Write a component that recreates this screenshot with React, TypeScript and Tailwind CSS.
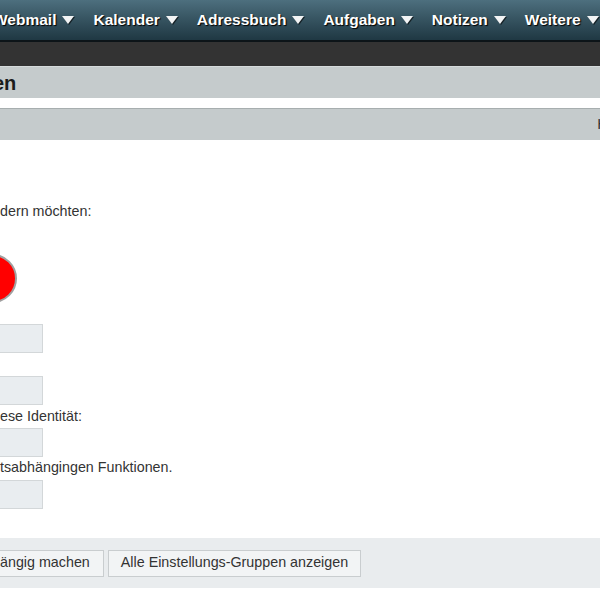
import React from "react";

const navItems = ["Webmail", "Kalender", "Adressbuch", "Aufgaben", "Notizen", "Weitere"];

function Arrow() {
  return (
    <svg width="12" height="8" viewBox="0 0 12 8" className="drop-shadow-[1px_1px_0_rgba(0,0,0,0.6)]">
      <polygon points="0,0 12,0 6,8" fill="#f2f4f5" />
    </svg>
  );
}

function Field() {
  return <div className="w-[43px] h-[29px] bg-[#e9edf0] border border-[#d3d7d9] border-l-0" />;
}

export default function App() {
  return (
    <div className="w-[600px] h-[600px] overflow-hidden bg-white font-['Liberation_Sans',Arial,sans-serif] text-[#333]">
      {/* top menu */}
      <div className="h-[42px] bg-gradient-to-b from-[#4d6f7e] to-[#1f3843] border-b-2 border-[#0c1418] flex items-center">
        <div className="flex items-center gap-[19px] -ml-[7px]">
          {navItems.map((item) => (
            <div key={item} className="flex items-center gap-[6px]">
              <span className="text-white font-bold text-[15.5px] [text-shadow:1px_1px_1px_#000]">{item}</span>
              <Arrow />
            </div>
          ))}
        </div>
      </div>
      <div className="h-[24px] bg-[#333333]" />

      {/* header */}
      <div className="h-[32px] bg-[#c5cbcc] border-t border-[#d6dbdc] flex items-center">
        <h1 className="-ml-[7px] text-[20px] leading-[24px] font-bold text-[#1c1c1c]">en</h1>
      </div>
      <div className="h-[10px]" />
      <div className="h-[32px] bg-[#c5cbcc] border-t border-[#a7aeaf] flex items-center justify-end">
        <span className="text-[15px] text-[#333] -mr-[8px]">H</span>
      </div>

      {/* form */}
      <div className="pt-[63px] text-[14.3px] leading-[17px]">
        <p>dern möchten:</p>
        <div className="mt-[34px] -ml-[32px] w-[49px] h-[49px] rounded-full bg-[#ff0000] border-2 border-[#a0a0a0]" />
        <div className="mt-[21px]">
          <Field />
        </div>
        <div className="mt-[23px]">
          <Field />
        </div>
        <p className="mt-[3px]">ese Identität:</p>
        <div className="mt-[3px]">
          <Field />
        </div>
        <p className="mt-[2px]">tsabhängingen Funktionen.</p>
        <div className="mt-[4px]">
          <Field />
        </div>
      </div>

      {/* button bar */}
      <div className="mt-[29px] h-[50px] bg-[#e9ecee] flex items-center gap-[4px] text-[14.3px]">
        <button className="h-[27px] pr-[13px] bg-[#f2f4f5] border border-[#c9cdcf] border-l-0 text-[#333]">
          ängig machen
        </button>
        <button className="h-[27px] px-[12px] bg-[#f2f4f5] border border-[#c9cdcf] text-[#333]">
          Alle Einstellungs-Gruppen anzeigen
        </button>
      </div>
    </div>
  );
}
